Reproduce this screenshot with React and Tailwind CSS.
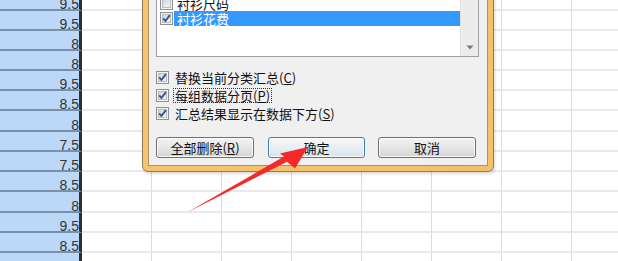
import React from "react";

const rows = [
  { h: "h-[11px]", v: "9.5" },
  { h: "h-[20px]", v: "9.5" },
  { h: "h-[20px]", v: "8" },
  { h: "h-[20px]", v: "8" },
  { h: "h-[20px]", v: "9.5" },
  { h: "h-[20px]", v: "8.5" },
  { h: "h-[21px]", v: "8" },
  { h: "h-[20px]", v: "7.5" },
  { h: "h-[20px]", v: "7.5" },
  { h: "h-[20px]", v: "8.5" },
  { h: "h-[21px]", v: "8" },
  { h: "h-[20px]", v: "9.5" },
  { h: "h-[20px]", v: "8.5" },
  { h: "h-[20px]", v: "" },
];

function Check({ checked }) {
  return (
    <svg width="13" height="13" viewBox="0 0 13 13" className="shrink-0 block">
      <defs>
        <linearGradient id="cbg" x1="0" y1="0" x2="1" y2="1">
          <stop offset="0" stopColor="#cfd3d8" />
          <stop offset="1" stopColor="#f7f7f7" />
        </linearGradient>
      </defs>
      <rect x="0.5" y="0.5" width="12" height="12" fill="#f4f4f4" stroke="#8e8f8f" />
      <rect x="2.5" y="2.5" width="8" height="8" fill="url(#cbg)" stroke="#b9bdc3" />
      {checked && (
        <path d="M3.2 6.4 L5.4 9 L9.9 3.2" fill="none" stroke="#3a4f8f" strokeWidth="1.9" strokeLinejoin="round" />
      )}
    </svg>
  );
}

function Btn({ w, def, children }) {
  return (
    <div
      className={
        "h-[21px] rounded-[3px] border flex items-center justify-center text-[13px] text-[#111] shadow-[inset_0_0_0_1px_rgba(255,255,255,0.8)] " +
        w +
        (def
          ? " border-[#3c7fb1] bg-gradient-to-b from-[#f6f9fb] via-[#e9eef2] to-[#d8e3ec]"
          : " border-[#707070] bg-gradient-to-b from-[#f3f3f3] via-[#e6e6e6] to-[#d4d4d4]")
      }
    >
      {children}
    </div>
  );
}

export default function App() {
  return (
    <div className="relative w-[618px] h-[261px] overflow-hidden bg-white font-['Noto_Sans_CJK_SC',sans-serif]">
      {/* spreadsheet */}
      <div className="flex flex-col">
        {rows.map((r, i) => (
          <div key={i} className={"flex shrink-0 " + r.h}>
            <div className="w-[82px] shrink-0 bg-[#bcd8f8] border-r-[3px] border-r-[#2e2e2e] border-b-2 border-b-[#7890aa] flex items-end justify-end font-['Liberation_Sans',Arial,sans-serif] text-[14px] leading-[10px] text-[#333]">
              {r.v}
            </div>
            {[0, 1, 2, 3, 4, 5, 6, 7].map((c) => (
              <div
                key={c}
                className="w-[70px] shrink-0 border-r border-r-[#dcdcdc] border-b-2 border-b-[#e9e9e9]"
              />
            ))}
          </div>
        ))}
      </div>

      {/* dialog */}
      <div className="absolute left-[142px] top-[-60px] w-[352px] h-[232px] rounded-b-[6px] border border-[#8d7d5e] bg-gradient-to-r from-[#f6c46e] to-[#f5c06a] p-[5px] shadow-[1px_2px_3px_rgba(0,0,0,0.15)]">
        <div className="h-full border border-[#a99168] bg-[#f0f0f0] flex flex-col justify-end pl-[7px] pr-[8px] pb-[7px] text-[13px] text-[#111]">
          {/* listbox */}
          <div className="h-[86px] border border-[#a0a0a0] bg-white flex">
            <div className="flex-1 flex flex-col pt-[24px] pl-[3px]">
              {[
                { t: "衬衫尺码", c: false, s: false },
                { t: "衬衫花费", c: true, s: true },
              ].map((it, i) => (
                <div key={i} className="h-[15px] flex items-center">
                  <Check checked={it.c} />
                  <div
                    className={
                      "ml-[1px] flex-1 h-full flex items-center pl-[3px] leading-none " +
                      (it.s ? "bg-[#3399ff] text-white" : "text-[#111]")
                    }
                  >
                    {it.t}
                  </div>
                </div>
              ))}
            </div>
            <div className="w-[18px] bg-[#ececec] border-l border-l-[#e2e2e2] flex flex-col justify-end">
              <div className="h-[18px] flex items-center justify-center">
                <svg width="8" height="5" viewBox="0 0 8 5">
                  <path d="M0.5 0.5 H7.5 L4 4.5 Z" fill="#7a7a7a" />
                </svg>
              </div>
            </div>
          </div>

          {/* options */}
          <div className="mt-[11px] flex flex-col">
            <div className="h-[18px] flex items-center">
              <Check checked />
              <span className="ml-[6px] leading-none">
                替换当前分类汇总(<span className="underline">C</span>)
              </span>
            </div>
            <div className="h-[18px] flex items-center">
              <Check checked />
              <span className="ml-[4px] h-[15px] px-[1px] border border-dotted border-[#333] flex items-center leading-none">
                每组数据分页(<span className="underline">P</span>)
              </span>
            </div>
            <div className="h-[18px] flex items-center">
              <Check checked />
              <span className="ml-[6px] leading-none">
                汇总结果显示在数据下方(<span className="underline">S</span>)
              </span>
            </div>
          </div>

          {/* buttons */}
          <div className="mt-[15px] flex">
            <Btn w="w-[98px]">
              全部删除(<span className="underline">R</span>)
            </Btn>
            <div className="ml-[14px]">
              <Btn w="w-[97px]" def>
                确定
              </Btn>
            </div>
            <div className="ml-[13px]">
              <Btn w="w-[98px]">取消</Btn>
            </div>
          </div>
        </div>
      </div>

      {/* red arrow annotation */}
      <svg className="absolute left-0 top-0 pointer-events-none" width="618" height="261" viewBox="0 0 618 261">
        <polygon
          points="187,212.5 284,156.5 280,153.5 308,147 295,168.5 287,161.8"
          fill="#f42a2a"
        />
      </svg>
    </div>
  );
}
